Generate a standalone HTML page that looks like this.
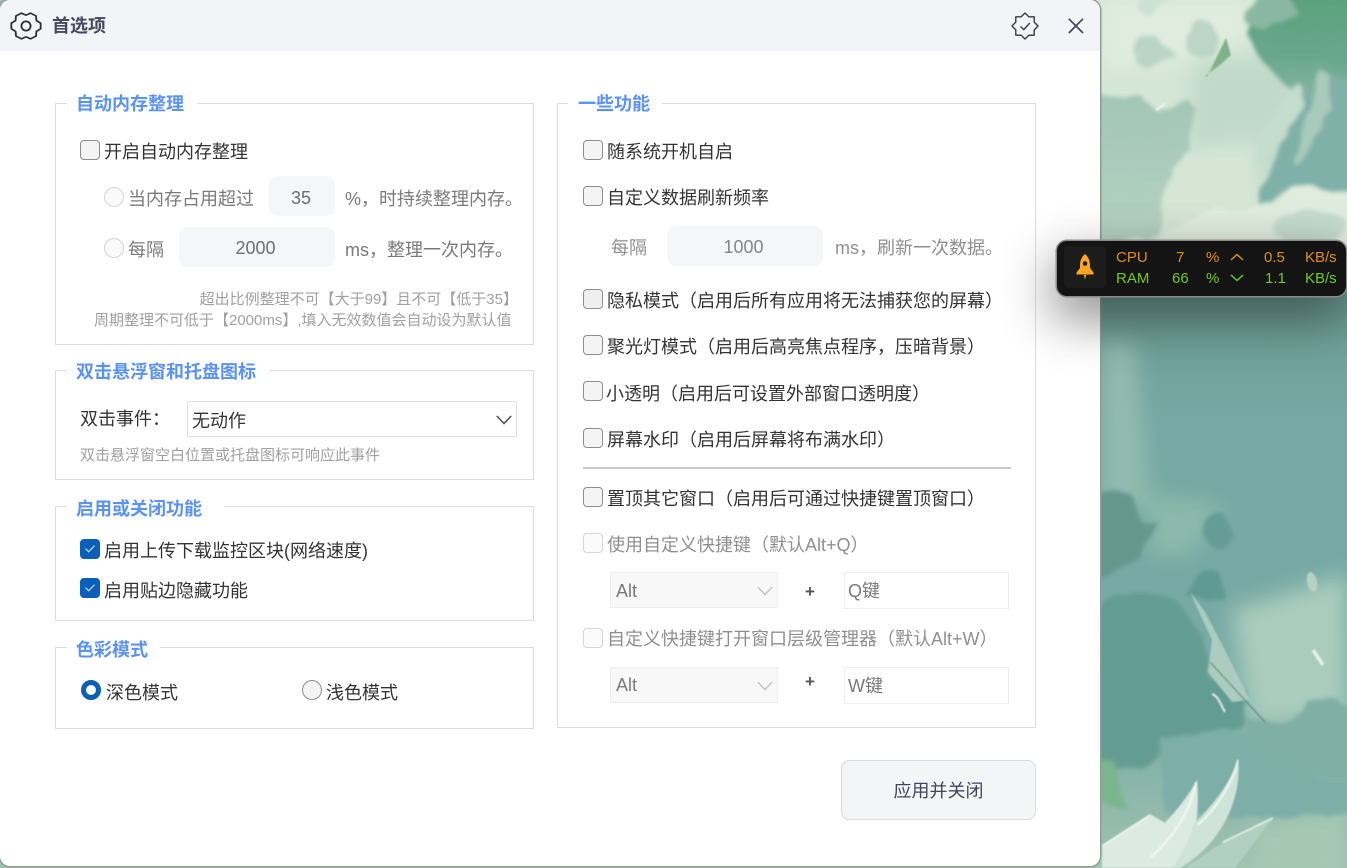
<!DOCTYPE html>
<html lang="zh-CN"><head><meta charset="utf-8"><title>首选项</title>
<style>
html,body{margin:0;padding:0;width:1347px;height:868px;overflow:hidden;background:#9cc0b0}
body{font-family:"Liberation Sans","Noto Sans CJK SC",sans-serif;position:relative}
#bg{position:absolute;left:0;top:0}
#win{position:absolute;left:0;top:0;width:1100px;height:866px;background:#fff;border-radius:10px;box-shadow:0 0 0 1.5px #8f9d96;overflow:hidden}
#bar{position:absolute;left:0;top:0;width:1100px;height:51px;background:#f3f4f7}
.t{position:absolute;font-size:18px;line-height:24px;white-space:nowrap;color:#333;margin-top:1px}
.g{color:#7a7a7a}.d{color:#8f8f8f}
.h{font-size:15px;color:#a0a0a0;line-height:20px}
.gt{position:absolute;font-size:18px;font-weight:700;line-height:24px;color:#5a92f6;background:#fff;white-space:nowrap;text-align:center;margin-top:1px}
.box{position:absolute;border:1.5px solid #dcdcdc;box-sizing:border-box}
.c{position:absolute;width:20px;height:20px;box-sizing:border-box;border:1.5px solid #8d8d8d;border-radius:4px;background:#f4f4f4}
.c.dis{border-color:#d6d6d6;background:#fbfbfb}
.c.on{background:#0a60b8;border-color:#0a60b8}
.r{position:absolute;width:20px;height:20px;box-sizing:border-box;border:1.5px solid #d4d4d4;border-radius:50%;background:#fafafa}
.in{position:absolute;background:#f5f6f8;border-radius:9px;color:#6e6e6e;text-align:center;font-size:18px}
.s{position:absolute;box-sizing:border-box;border:1.5px solid #eeeeee}
svg{position:absolute;overflow:visible}
#w{position:absolute;left:1057px;top:241px;width:289px;height:55px;background:#141414;border-radius:10px;box-shadow:0 0 0 1.5px #8a8a8a,0 20px 50px 5px rgba(0,0,0,.42)}
.w{position:absolute;font-size:15px;line-height:20px;white-space:nowrap;margin-top:1px}
.o{color:#dc8f1f}.n{color:#72c91f}
</style></head><body>
<svg id="bg" width="1347" height="868" viewBox="0 0 1347 868">
<defs>
<linearGradient id="low" gradientUnits="userSpaceOnUse" x1="0" y1="240" x2="0" y2="868">
<stop offset="0" stop-color="#6d968c"/><stop offset=".12" stop-color="#6f9f98"/><stop offset=".3" stop-color="#76a9a4"/><stop offset=".6" stop-color="#78aaa5"/><stop offset=".85" stop-color="#88b4a9"/><stop offset="1" stop-color="#9fc3b0"/>
</linearGradient>
<linearGradient id="tg" gradientUnits="userSpaceOnUse" x1="0" y1="0" x2="0" y2="95"><stop offset="0" stop-color="#5aa27c"/><stop offset=".6" stop-color="#69a78c"/><stop offset="1" stop-color="#84b5a4"/></linearGradient>
<linearGradient id="lc" gradientUnits="userSpaceOnUse" x1="0" y1="97" x2="0" y2="240"><stop offset="0" stop-color="#a3c6b7"/><stop offset="1" stop-color="#b4d1c1"/></linearGradient>
<filter id="b1" filterUnits="userSpaceOnUse" x="1090" y="-30" width="280" height="920"><feGaussianBlur stdDeviation="10"/></filter>
<filter id="b2" filterUnits="userSpaceOnUse" x="1090" y="-30" width="280" height="920"><feTurbulence type="fractalNoise" baseFrequency=".035" numOctaves="2" seed="4" result="n"/><feDisplacementMap in="SourceGraphic" in2="n" scale="14" xChannelSelector="R" yChannelSelector="G"/><feGaussianBlur stdDeviation="2.2"/></filter>
<filter id="b3" filterUnits="userSpaceOnUse" x="1090" y="-30" width="280" height="920"><feGaussianBlur stdDeviation=".7"/></filter>
</defs>
<rect x="1090" width="260" height="250" fill="#d4e6d5"/>
<rect x="1090" y="240" width="260" height="630" fill="url(#low)"/>
<g filter="url(#b1)">
<path d="M1102 0H1250V40L1190 60 1102 70Z" fill="#e0edde"/>
<path d="M1195 60 1300 55 1290 170 1240 200H1180Z" fill="#c0d9c9"/>
<path d="M1170 150 1260 140 1255 215 1150 235Z" fill="#d5e6d5"/>
<path d="M1103 340 1135 345 1150 510 1103 500Z" fill="#93bbae"/>
<path d="M1150 495 1225 505 1190 555 1150 555Z" fill="#8db9ab"/>
<path d="M1232 610 1347 575 1347 720 1250 725Z" fill="#a9ccbd"/>
<path d="M1250 825 1347 810 1347 880 1250 880Z" fill="#a6c8b3"/>
</g>
<g filter="url(#b2)">
<path d="M1096 97 1140 95 1160 112 1190 97 1197 110 1190 150 1165 180 1157 235 1096 245Z" fill="url(#lc)"/>
<path d="M1130 54C1130 38 1145 30 1155 36 1165 44 1175 52 1180 55L1150 66 1136 62Z" fill="#bad5c4"/>
<ellipse cx="1204" cy="39" rx="16" ry="20" fill="#bbd6c5"/>
<path d="M1140 -5H1175L1150 15 1140 12Z" fill="#cde1d2"/>
<path d="M1245 35 1270 -10 1360 -10 1360 65 1335 90 1300 100 1260 60Z" fill="url(#tg)"/>
<path d="M1243 12 1262 -5H1290L1300 15 1280 25 1262 30 1245 22Z" fill="#8ab7a3"/>
<path d="M1258 205C1268 170 1285 140 1300 100L1330 75 1360 83V197L1313 185C1295 187 1277 197 1258 205Z" fill="#7fb1a9"/>
<path d="M1295 160 1320 70 1333 75 1330 110 1300 165Z" fill="#a9cbbb"/>
<path d="M1260 135 1300 85 1303 105 1275 150 1250 170Z" fill="#c5ddcd"/>
<path d="M1150 245C1180 215 1240 205 1277 202 1290 190 1305 183 1320 187 1335 190 1360 197 1360 198V250H1150Z" fill="#e0edde"/>
<ellipse cx="1310" cy="226" rx="36" ry="17" fill="#c5dccc"/>
<path d="M1096 490 1130 495 1142 520 1157 522 1140 560 1096 580Z" fill="#66978f"/>
<ellipse cx="1218" cy="532" rx="15" ry="18" fill="#669c96"/>
<path d="M1187 598C1190 575 1205 565 1222 572L1225 599Z" fill="#5f9a92"/>
<path d="M1096 605C1130 585 1165 585 1190 615L1207 650 1210 680 1245 690 1243 725 1205 735 1170 750 1140 770 1096 770Z" fill="#639c93"/>
<path d="M1243 716C1265 725 1285 730 1297 715 1310 690 1330 695 1360 710V785L1300 770 1250 745Z" fill="#7fafa5"/>
<path d="M1163 738 1240 730 1300 770 1360 790V812L1240 818 1163 810Z" fill="#7dafa8"/>
<path d="M1096 758 1115 758 1117 775 1125 810 1096 800Z" fill="#79b58d"/>
</g>
<g filter="url(#b3)">
<path d="M1207 77 1226 38 1231 55 1220 65 1205 76Z" fill="#80b28a"/>
<path d="M1190 592 1205 612 1225 650 1250 700 1232 702 1208 672 1212 640Z" fill="#abccbf"/>
<path d="M1102 845 1150 814 1170 826 1125 858 1115 868H1102Z" fill="#dcebe2"/>
<path d="M1108 868C1140 850 1178 815 1197 780 1200 815 1195 845 1180 868Z" fill="#dcebe2"/>
<path d="M1194 824C1212 805 1230 785 1238 759 1242 790 1228 840 1180 868H1172C1182 855 1190 838 1194 824Z" fill="#d0e3d8"/>
<path d="M1223 842 1273 818 1250 848 1235 868H1185Z" fill="#b1d0c2"/>
<path d="M1223 842 1273 818" stroke="#eef6ef" stroke-width="1.5" fill="none"/>
<path d="M1196 782C1190 815 1170 840 1150 858" stroke="#f4f9f5" stroke-width="1.8" fill="none"/>
<path d="M1238 760C1232 785 1215 810 1198 825" stroke="#f4f9f5" stroke-width="1.8" fill="none"/>
<path d="M1102 846 1150 815" stroke="#f4f9f5" stroke-width="1.5" fill="none"/>
<path d="M1210 662 1265 722" stroke="#4f7f75" stroke-width="1" fill="none"/>
<path d="M1212 694C1218 696 1220 703 1225 712" stroke="#e6f0ea" stroke-width="2" fill="none"/>
<path d="M1313 650 1323 665" stroke="#e8f1ea" stroke-width="3.5" fill="none"/>
<ellipse cx="1312" cy="582" rx="5" ry="10" fill="#b4d3c6" transform="rotate(-12 1312 582)"/>
<path d="M1156 110 1165 104" stroke="#f0f6ef" stroke-width="2" fill="none"/>
</g>
</svg>

<div id="win">
<div id="bar"></div>
<svg style="left:0;top:0" width="60" height="51"><g transform="translate(26 26) scale(1 .9) translate(-26 -26)"><polygon points="40.67,22.88 40.67,29.12 36.39,32 36.04,37.15 30.64,40.27 26,38 21.36,40.27 15.96,37.15 15.61,32 11.33,29.12 11.33,22.88 15.61,20 15.96,14.85 21.36,11.73 26,14 30.64,11.73 36.04,14.85 36.39,20" fill="none" stroke="#2d2d33" stroke-width="1.8" stroke-linejoin="round"/></g><circle cx="26" cy="26" r="4.6" fill="none" stroke="#2d2d33" stroke-width="1.8"/></svg>
<div class="t" style="left:52px;top:13px;font-weight:700;color:#4a4662">首选项</div>
<svg style="left:1025px;top:26px" width="1" height="1"><polygon points="13,0 9.24,3.83 9.19,9.19 3.83,9.24 0,13 -3.83,9.24 -9.19,9.19 -9.24,3.83 -13,0 -9.24,-3.83 -9.19,-9.19 -3.83,-9.24 0,-13 3.83,-9.24 9.19,-9.19 9.24,-3.83" fill="none" stroke="#3a3a45" stroke-width="1.4" stroke-linejoin="round"/><path d="M-4.5 .5-1.2 3.6 4.8-3" fill="none" stroke="#3a3a45" stroke-width="1.4"/></svg>
<svg style="left:1068px;top:18px" width="16" height="16"><path d="M.8.8 15 15M15 .8.8 15" stroke="#46425e" stroke-width="1.7" fill="none"/></svg>

<div class="box" style="left:54.5px;top:102.5px;width:479px;height:242px"></div>
<div class="gt" style="left:67px;top:91px;width:130px;text-align:left;text-indent:9px">自动内存整理</div>
<div class="c" style="left:80px;top:140px"></div>
<div class="t" style="left:104px;top:139px">开启自动内存整理</div>
<div class="r" style="left:104px;top:187px"></div>
<div class="t g" style="left:128px;top:186px">当内存占用超过</div>
<div class="in" style="left:269px;top:176px;width:66px;height:40px;line-height:44px;text-indent:-2px">35</div>
<div class="t g" style="left:345px;top:186px">%，时持续整理内存。</div>
<div class="r" style="left:104px;top:238px"></div>
<div class="t g" style="left:128px;top:237px">每隔</div>
<div class="in" style="left:179px;top:227px;width:156px;height:40px;line-height:42px;text-indent:-3px">2000</div>
<div class="t g" style="left:345px;top:237px">ms，整理一次内存。</div>
<div class="t h" style="right:582px;top:289px">超出比例整理不可【大于99】且不可【低于35】</div>
<div class="t h" style="left:94px;top:310px">周期整理不可低于【2000ms】,填入无效数值会自动设为默认值</div>

<div class="box" style="left:54.5px;top:369.5px;width:479px;height:110px"></div>
<div class="gt" style="left:67px;top:359px;width:202px;text-align:left;text-indent:9px">双击悬浮窗和托盘图标</div>
<div class="t" style="left:80px;top:406px">双击事件：</div>
<div class="s" style="left:187px;top:401px;width:330px;height:36px;border-color:#dedede;border-radius:2px"></div>
<div class="t" style="left:192px;top:408px">无动作</div>
<svg style="left:496px;top:415px" width="16" height="10"><path d="M.8 1 8 8.5 15.2 1" fill="none" stroke="#555" stroke-width="1.6"/></svg>
<div class="t h" style="left:80px;top:445px">双击悬浮窗空白位置或托盘图标可响应此事件</div>

<div class="box" style="left:54.5px;top:505.5px;width:479px;height:115px"></div>
<div class="gt" style="left:67px;top:496px;width:157px;text-align:left;text-indent:9px">启用或关闭功能</div>
<div class="c on" style="left:80px;top:539px"><svg style="left:4px;top:5px" width="10" height="8"><path d="M.5 3.5 3.5 6.8 9.5.8" fill="none" stroke="#cfe0f4" stroke-width="1.1"/></svg></div>
<div class="t" style="left:104px;top:538px">启用上传下载监控区块(网络速度)</div>
<div class="c on" style="left:80px;top:578px"><svg style="left:4px;top:5px" width="10" height="8"><path d="M.5 3.5 3.5 6.8 9.5.8" fill="none" stroke="#cfe0f4" stroke-width="1.1"/></svg></div>
<div class="t" style="left:104px;top:578px">启用贴边隐藏功能</div>

<div class="box" style="left:54.5px;top:646.5px;width:479px;height:82px"></div>
<div class="gt" style="left:67px;top:637px;width:93px;text-align:left;text-indent:9px">色彩模式</div>
<div class="r" style="left:81px;top:680px;border:5.5px solid #0a60b8;background:#fff"></div>
<div class="t" style="left:106px;top:680px">深色模式</div>
<div class="r" style="left:302px;top:680px;border-color:#8d8d8d;background:#f4f4f4"></div>
<div class="t" style="left:326px;top:680px">浅色模式</div>

<div class="box" style="left:557px;top:102.5px;width:479px;height:625.5px"></div>
<div class="gt" style="left:568px;top:91px;width:94px;text-align:left;text-indent:10px">一些功能</div>
<div class="c" style="left:583px;top:140px"></div><div class="t" style="left:607px;top:139px">随系统开机自启</div>
<div class="c" style="left:583px;top:186px"></div><div class="t" style="left:607px;top:185px">自定义数据刷新频率</div>
<div class="t d" style="left:611px;top:235px">每隔</div>
<div class="in" style="left:667px;top:226px;width:156px;height:40px;line-height:42px;color:#858585;text-indent:-3px">1000</div>
<div class="t d" style="left:835px;top:235px">ms，刷新一次数据。</div>
<div class="c" style="left:583px;top:289px;background:#efefef"></div><div class="t" style="left:607px;top:288px">隐私模式（启用后所有应用将无法捕获您的屏幕）</div>
<div class="c" style="left:583px;top:335px"></div><div class="t" style="left:607px;top:334px">聚光灯模式（启用后高亮焦点程序，压暗背景）</div>
<div class="c" style="left:583px;top:381px"></div><div class="t" style="left:606px;top:381px">小透明（启用后可设置外部窗口透明度）</div>
<div class="c" style="left:583px;top:428px"></div><div class="t" style="left:607px;top:427px">屏幕水印（启用后屏幕将布满水印）</div>
<div style="position:absolute;left:583px;top:467px;width:428px;height:1.5px;background:#c9c9c9"></div>
<div class="c" style="left:583px;top:487px"></div><div class="t" style="left:607px;top:486px">置顶其它窗口（启用后可通过快捷键置顶窗口）</div>
<div class="c dis" style="left:583px;top:533px"></div><div class="t d" style="left:607px;top:532px">使用自定义快捷键（默认Alt+Q）</div>
<div class="s" style="left:610px;top:572px;width:168px;height:36px;background:#f8f8f8"></div>
<div class="t g" style="left:616px;top:578px">Alt</div>
<svg style="left:757px;top:586px" width="16" height="10"><path d="M.8 1 8 8.5 15.2 1" fill="none" stroke="#c4c4c4" stroke-width="1.5"/></svg>
<div class="t" style="left:805px;top:579px;color:#555;font-weight:700;font-size:17px">+</div>
<div class="s" style="left:844px;top:572px;width:165px;height:37px"></div>
<div class="t g" style="left:848px;top:578px">Q键</div>
<div class="c dis" style="left:583px;top:628px"></div><div class="t d" style="left:607px;top:626px">自定义快捷键打开窗口层级管理器（默认Alt+W）</div>
<div class="s" style="left:610px;top:667px;width:168px;height:36px;background:#f8f8f8"></div>
<div class="t g" style="left:616px;top:672px">Alt</div>
<svg style="left:757px;top:681px" width="16" height="10"><path d="M.8 1 8 8.5 15.2 1" fill="none" stroke="#c4c4c4" stroke-width="1.5"/></svg>
<div class="t" style="left:805px;top:669px;color:#555;font-weight:700;font-size:17px">+</div>
<div class="s" style="left:844px;top:667px;width:165px;height:37px"></div>
<div class="t g" style="left:848px;top:673px">W键</div>
<div style="position:absolute;left:841px;top:760px;width:195px;height:60px;box-sizing:border-box;background:#f4f5f7;border:1.5px solid #d9d9d9;border-radius:8px;text-align:center;line-height:60px;font-size:18px;color:#46425e">应用并关闭</div>
</div>

<div id="w">
<div style="position:absolute;left:7px;top:5px;width:42px;height:42px;background:#1c1c1c;border-radius:4px"></div>
<svg style="left:19px;top:13px" width="18" height="27"><path d="M9 0C12.5 3 14 7 14 11V14L17.5 18.5V20.5H.5V18.5L4 14V11C4 7 5.5 3 9 0Z" fill="#ffa51f"/><path d="M7.8 21H10.2L9 25.5Z" fill="#ffa51f"/><circle cx="9" cy="9.5" r="2.3" fill="#1c1c1c"/></svg>
<div class="w o" style="left:59px;top:6px">CPU</div>
<div class="w o" style="left:119px;top:6px">7</div>
<div class="w o" style="left:149px;top:6px">%</div>
<svg style="left:173px;top:12px" width="14" height="8"><path d="M1 7 7 1.5 13 7" fill="none" stroke="#dc8f1f" stroke-width="1.5"/></svg>
<div class="w o" style="left:207px;top:6px">0.5</div>
<div class="w o" style="left:248px;top:6px">KB/s</div>
<div class="w n" style="left:59px;top:27px">RAM</div>
<div class="w n" style="left:115px;top:27px">66</div>
<div class="w n" style="left:149px;top:27px">%</div>
<svg style="left:173px;top:33px" width="14" height="8"><path d="M1 1 7 6.5 13 1" fill="none" stroke="#72c91f" stroke-width="1.5"/></svg>
<div class="w n" style="left:208px;top:27px">1.1</div>
<div class="w n" style="left:248px;top:27px">KB/s</div>
</div>
</body></html>
